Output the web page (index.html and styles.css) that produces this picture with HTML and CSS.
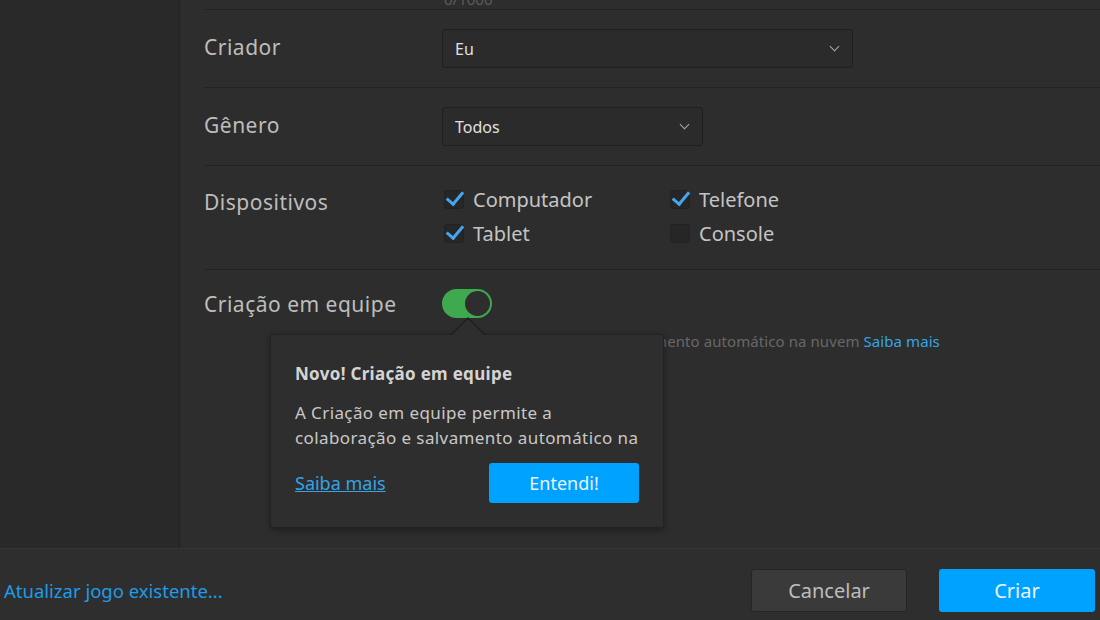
FILE: index.html
```html
<!DOCTYPE html>
<html lang="pt">

<head>
    <meta charset="UTF-8">
    <title>Novo jogo</title>
    <link rel="stylesheet" href="styles.css">
</head>

<body>
    <div class="window">
        <div class="main">
            <div class="sidebar"></div>
            <div class="content">
                <div class="row counter-row">
                    <div></div>
                    <div class="counter">0/1000</div>
                </div>
                <div class="row">
                    <div class="label">Criador</div>
                    <div class="select select-wide"><span>Eu</span><span class="chevron"></span></div>
                </div>
                <div class="row">
                    <div class="label">Gênero</div>
                    <div class="select select-narrow"><span>Todos</span><span class="chevron"></span></div>
                </div>
                <div class="row row-devices">
                    <div class="label">Dispositivos</div>
                    <div class="devices">
                        <label class="check"><span class="box on"></span>Computador</label>
                        <label class="check"><span class="box on"></span>Telefone</label>
                        <label class="check"><span class="box on"></span>Tablet</label>
                        <label class="check"><span class="box"></span>Console</label>
                    </div>
                </div>
                <div class="row row-team">
                    <div class="label">Criação em equipe</div>
                    <div class="team">
                        <div class="toggle"><span class="knob"></span></div>
                        <p class="hint">Habilita colaboração e o salvamento automático na nuvem <a href="#">Saiba mais</a></p>
                    </div>
                    <!-- popover -->
                    <div class="popover">
                        <div class="popover-title">Novo! Criação em equipe</div>
                        <p class="popover-body">A Criação em equipe permite a<br>colaboração e salvamento automático na</p>
                        <div class="popover-foot">
                            <a href="#">Saiba mais</a>
                            <div class="btn btn-primary btn-small">Entendi!</div>
                        </div>
                    </div>
                    <!-- /popover -->
                </div>
            </div>
        </div>
        <div class="footer">
            <a href="#" class="update-link">Atualizar jogo existente...</a>
            <div class="actions">
                <div class="btn btn-secondary">Cancelar</div>
                <div class="btn btn-primary">Criar</div>
            </div>
        </div>
    </div>
</body>

</html>
```

FILE: styles.css
```css
* {
    margin: 0;
    padding: 0;
    box-sizing: border-box;
}

a {
    text-decoration: none;
}

body {
    width: 1100px;
    height: 620px;
    overflow: hidden;
    background-color: #2e2e2e;
    font-family: 'Noto Sans', 'Open Sans', sans-serif;
    color: #bdbdbd;
}

.window {
    display: flex;
    flex-direction: column;
    height: 620px;
}

.main {
    display: flex;
    height: 548px;
    overflow: hidden;
}

.sidebar {
    width: 180px;
    background-color: #292929;
    border-right: 1px solid #232323;
}

.content {
    flex: 1;
    padding-left: 24px;
    background-color: #2d2d2d;
}

.row {
    display: grid;
    grid-template-columns: 238px 1fr;
    align-items: center;
    padding: 19px 0;
    border-bottom: 1px solid #232323;
}

.counter-row {
    padding: 0;
    margin-top: -11px;
}

.counter {
    font-size: 15px;
    line-height: 20px;
    color: #5c5c5c;
    padding-left: 2px;
}

.label {
    font-size: 21px;
    letter-spacing: 0.5px;
    color: #bdbdbd;
    margin-top: -4px;
}

/* 下拉框 */
.select {
    display: flex;
    align-items: center;
    justify-content: space-between;
    height: 39px;
    padding: 0 14px 0 12px;
    border: 1px solid #1f1f1f;
    border-radius: 3px;
    background-color: #2b2b2b;
    font-size: 16px;
    color: #e0e0e0;
}

.select-wide {
    width: 411px;
}

.select-narrow {
    width: 261px;
}

.chevron {
    width: 7px;
    height: 7px;
    border-right: 1.5px solid #a8a8a8;
    border-bottom: 1.5px solid #a8a8a8;
    transform: rotate(45deg);
    margin-top: -4px;
}

/* 设备选项 */
.row-devices {
    align-items: start;
    padding: 16px 0 19px;
}

.row-devices .label {
    margin-top: 6px;
}

.devices {
    display: grid;
    grid-template-columns: 226px auto;
    row-gap: 0;
    padding-left: 2px;
}

.check {
    display: flex;
    align-items: center;
    gap: 9px;
    height: 34px;
    font-size: 20px;
    color: #c4c4c4;
}

.box {
    position: relative;
    width: 20px;
    height: 19px;
    border: 1px solid #222;
    border-radius: 3px;
    background-color: #262626;
}

.box.on::after {
    content: "";
    position: absolute;
    left: 5px;
    top: -3px;
    width: 7px;
    height: 14px;
    border-right: 3px solid #45a6ef;
    border-bottom: 3px solid #45a6ef;
    transform: rotate(40deg);
}

/* 团队创作 */
.row-team {
    position: relative;
    border-bottom: none;
    align-items: start;
    padding: 19px 0 0;
}

.row-team .label {
    margin-top: 1px;
}

.toggle {
    display: flex;
    justify-content: flex-end;
    align-items: center;
    width: 50px;
    height: 29px;
    padding: 2px;
    border-radius: 15px;
    background-color: #3fa94f;
}

.knob {
    width: 25px;
    height: 25px;
    border-radius: 50%;
    background-color: #2e2e2e;
}

.hint {
    margin-top: 13px;
    font-size: 15px;
    letter-spacing: 0.08px;
    line-height: 20px;
    color: #686868;
}

.hint a {
    color: #35a4e6;
}

.popover {
    position: absolute;
    left: 66px;
    top: 64px;
    width: 394px;
    height: 194px;
    padding: 27px 0 0 24px;
    background-color: #2e2e2e;
    border: 1px solid #222;
    border-radius: 3px;
    box-shadow: 0 2px 6px rgba(0, 0, 0, 0.35);
}

.popover::before,
.popover::after {
    content: "";
    position: absolute;
    left: 179px;
    border-style: solid;
    border-color: transparent;
}

.popover::before {
    top: -18px;
    border-width: 0 18px 18px;
    border-bottom-color: #1e1e1e;
}

.popover::after {
    top: -16px;
    left: 180px;
    border-width: 0 17px 17px;
    border-bottom-color: #2e2e2e;
}

.popover-title {
    font-size: 17px;
    font-weight: bold;
    letter-spacing: 0.3px;
    line-height: 24px;
    color: #d4d4d4;
}

.popover-body {
    margin-top: 14px;
    font-size: 17px;
    letter-spacing: 0.4px;
    line-height: 25px;
    white-space: nowrap;
    color: #c8c8c8;
}

.popover-foot {
    display: flex;
    justify-content: space-between;
    align-items: center;
    margin-top: 13px;
    padding-right: 24px;
}

.popover-foot a {
    font-size: 18px;
    color: #35a4e6;
    text-decoration: underline;
}

/* 按钮 */
.btn {
    display: flex;
    align-items: center;
    justify-content: center;
    border-radius: 3px;
    font-size: 20px;
}

.btn-primary {
    background-color: #00a2ff;
    color: #eaf6ff;
}

.btn-secondary {
    background-color: #3a3a3a;
    border: 1px solid #252525;
    color: #bdbdbd;
}

.btn-small {
    width: 150px;
    height: 40px;
    font-size: 18px;
}

/* 底栏 */
.footer {
    flex: 1;
    display: flex;
    align-items: center;
    justify-content: space-between;
    padding: 0 5px 0 4px;
    border-top: 1px solid #363636;
    background-color: #2e2e2e;
}

.update-link {
    font-size: 18.5px;
    color: #1d9ce8;
    margin-top: 12px;
}

.actions {
    display: flex;
    gap: 32px;
    margin-top: 12px;
}

.actions .btn {
    width: 156px;
    height: 43px;
}
```
